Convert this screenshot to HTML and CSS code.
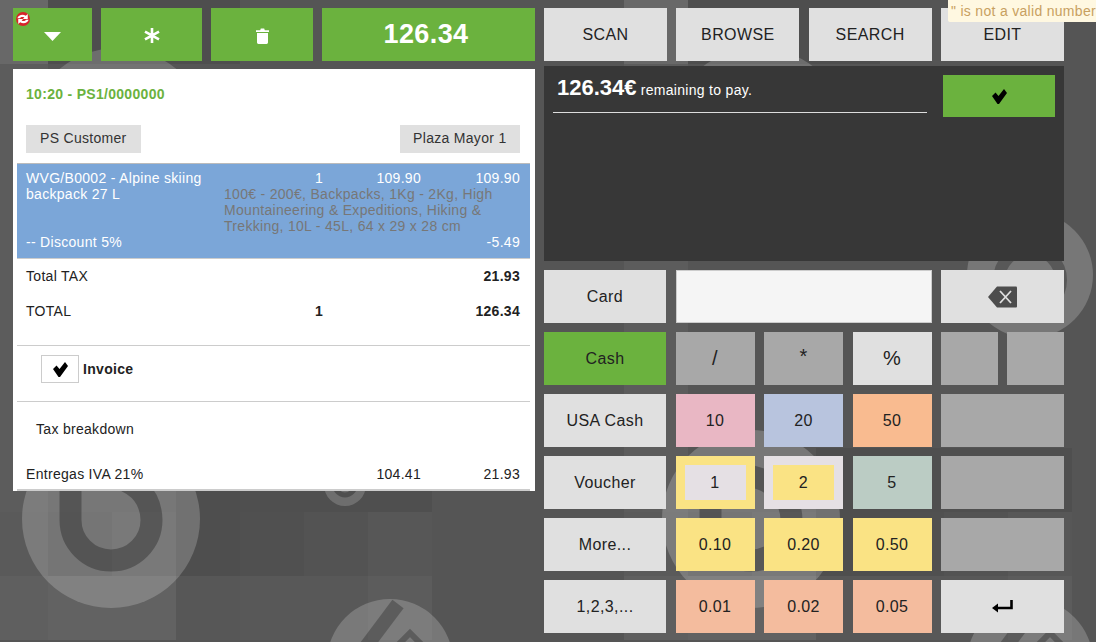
FILE: index.html
```html
<!DOCTYPE html>
<html lang="en">
  <head>
    <meta charset="UTF-8" />
    <title>Point of Sale</title>
    <link rel="stylesheet" href="styles.css">
  </head>
  <body>
    <!-- decorative mosaic behind everything -->
    <svg class="mosaic" width="1096" height="642" aria-hidden="true">
      <defs>
        <g id="motif">
          <rect x="-16" y="0" width="64" height="64" fill="#686868"/>
          <rect x="48" y="0" width="192" height="64" fill="#4e4e4e"/>
          <rect x="-16" y="64" width="64" height="448" fill="#5c5c5c"/>
          <rect x="-16" y="512" width="64" height="64" fill="#5a5a5a"/>
          <rect x="48" y="512" width="64" height="64" fill="#535353"/>
          <rect x="112" y="512" width="64" height="64" fill="#585858"/>
          <rect x="176" y="448" width="64" height="128" fill="#4e4e4e"/>
          <rect x="240" y="448" width="192" height="64" fill="#4f4f4f"/>
          <rect x="240" y="512" width="64" height="64" fill="#505050"/>
          <rect x="304" y="512" width="64" height="64" fill="#535353"/>
          <rect x="368" y="512" width="64" height="64" fill="#575757"/>
          <rect x="-16" y="576" width="64" height="64" fill="#5f5f5f"/>
          <rect x="48" y="576" width="128" height="64" fill="#626262"/>
          <rect x="176" y="576" width="64" height="64" fill="#575757"/>
          <rect x="240" y="576" width="128" height="64" fill="#585858"/>
          <rect x="368" y="576" width="64" height="64" fill="#5c5c5c"/>
          <circle cx="118" cy="140" r="92" fill="#fff" fill-opacity="0.18"/>
          <circle cx="111" cy="519" r="89" fill="#fff" fill-opacity="0.2"/>
          <path d="M70.5 470V520a40 40 0 0 0 81 0C151 495 135 480 105 475" fill="none" stroke="#000" stroke-opacity="0.28" stroke-width="22"/>
          <circle cx="345" cy="485" r="21" fill="#fff" fill-opacity="0.18"/>
          <circle cx="345" cy="485" r="10" fill="none" stroke="#000" stroke-opacity="0.28" stroke-width="5"/>
          <circle cx="390" cy="662" r="63" fill="#fff" fill-opacity="0.2"/>
          <path d="M398 604L365 648" stroke="#000" stroke-opacity="0.26" stroke-width="14"/>
          <path d="M397 646L410 633L423 646" fill="none" stroke="#000" stroke-opacity="0.26" stroke-width="6"/>
          <circle cx="390" cy="275" r="63" fill="#fff" fill-opacity="0.2"/>
          <circle cx="390" cy="280" r="31" fill="none" stroke="#000" stroke-opacity="0.26" stroke-width="12"/>
        </g>
      </defs>
      <rect width="1096" height="642" fill="#555"/>
      <use href="#motif"/>
      <use href="#motif" x="640"/>
    </svg>

    <div class="screen">
      <div class="left">
        <div class="actions">
          <button class="btn green act-menu">
            <span class="badge">
              <svg viewBox="2 2 10 10" width="14" height="14">
                <path d="M3 6.5C3.6 4.2 6.6 3.2 9 4.6L10.4 3.4V7H6.8L8 5.9C6.6 5.2 5.4 5.6 4.8 6.5Z M11 7.5C10.4 9.8 7.4 10.8 5 9.4L3.6 10.6V7H7.2L6 8.1C7.4 8.8 8.6 8.4 9.2 7.5Z" fill="#fff"/>
              </svg>
            </span>
            <svg class="caret" viewBox="0 0 17 9" width="17" height="9"><path d="M0 0H17L8.5 9Z" fill="#fff"/></svg>
          </button>
          <button class="btn green act-star">
            <svg viewBox="0 0 16 15" width="16" height="15">
              <path d="M8 0V15M1 3.6L15 11.4M15 3.6L1 11.4" stroke="#fff" stroke-width="2.6"/>
            </svg>
          </button>
          <button class="btn green act-trash">
            <svg viewBox="0 0 13 16" width="13" height="16">
              <path d="M0 2.2H4.2L4.8 0.6H8.2L8.8 2.2H13V4H0ZM1 5H12V14.6Q12 16 10.6 16H2.4Q1 16 1 14.6Z" fill="#fff"/>
            </svg>
          </button>
          <button class="btn green act-total">126.34</button>
        </div>

        <div class="ticket">
          <div class="ticket-ref">10:20 - PS1/0000000</div>
          <div class="ticket-parties">
            <span class="chip">PS Customer</span>
            <span class="chip">Plaza Mayor 1</span>
          </div>

          <div class="lines selected">
            <div class="line-name">WVG/B0002 - Alpine skiing backpack 27 L</div>
            <div class="col-qty">1</div>
            <div class="col-price">109.90</div>
            <div class="col-total">109.90</div>
            <div class="line-attrs">100€ - 200€, Backpacks, 1Kg - 2Kg, High Mountaineering &amp; Expeditions, Hiking &amp; Trekking, 10L - 45L, 64 x 29 x 28 cm</div>
            <div class="line-discount">-- Discount 5%</div>
            <div class="col-total">-5.49</div>
          </div>

          <div class="lines sum-tax">
            <div class="line-discount">Total TAX</div>
            <div class="col-total strong">21.93</div>
          </div>
          <div class="lines sum-total">
            <div class="line-discount">TOTAL</div>
            <div class="col-qty strong">1</div>
            <div class="col-total strong">126.34</div>
          </div>

          <div class="invoice">
            <span class="checkbox">
              <svg viewBox="0 0 15 15" width="15" height="15">
                <path d="M0 7L3.5 3.5L6.5 7L12 0L15 4L7 15H5.5Z" fill="#000"/>
              </svg>
            </span>
            <b>Invoice</b>
          </div>

          <div class="tax-title">Tax breakdown</div>
          <div class="lines tax-row">
            <div class="line-discount">Entregas IVA 21%</div>
            <div class="col-price">104.41</div>
            <div class="col-total">21.93</div>
          </div>
        </div>
      </div>

      <div class="right">
        <div class="modes">
          <button class="btn">SCAN</button>
          <button class="btn">BROWSE</button>
          <button class="btn">SEARCH</button>
          <button class="btn">EDIT</button>
        </div>

        <div class="payment">
          <div class="remaining">
            <div class="remaining-text"><strong>126.34€</strong> remaining to pay.</div>
          </div>
          <button class="btn green confirm">
            <svg viewBox="0 0 15 15" width="15" height="15">
              <path d="M0 7L3.5 3.5L6.5 7L12 0L15 4L7 15H5.5Z" fill="#000"/>
            </svg>
          </button>
        </div>

        <div class="keypad">
          <button class="btn">Card</button>
          <div class="display span-3"></div>
          <button class="btn">
            <svg viewBox="0 0 29 22" width="29" height="22">
              <path d="M0 11L9 0.5H28Q29 0.5 29 1.5V20.5Q29 21.5 28 21.5H9Z" fill="#4d4d4d"/>
              <path d="M12 5L23 17M23 5L12 17" stroke="#e0e0e0" stroke-width="1.8"/>
            </svg>
          </button>

          <button class="btn green">Cash</button>
          <button class="btn off big">/</button>
          <button class="btn off big star">*</button>
          <button class="btn big">%</button>
          <div class="half">
            <button class="btn off"></button>
            <button class="btn off"></button>
          </div>

          <button class="btn">USA Cash</button>
          <button class="btn pink">10</button>
          <button class="btn blue">20</button>
          <button class="btn orange">50</button>
          <button class="btn off"></button>

          <button class="btn">Voucher</button>
          <button class="btn yellow framed"><span class="mauve">1</span></button>
          <button class="btn mauve framed"><span class="yellow">2</span></button>
          <button class="btn teal">5</button>
          <button class="btn off"></button>

          <button class="btn">More...</button>
          <button class="btn yellow">0.10</button>
          <button class="btn yellow">0.20</button>
          <button class="btn yellow">0.50</button>
          <button class="btn off"></button>

          <button class="btn">1,2,3,...</button>
          <button class="btn salmon">0.01</button>
          <button class="btn salmon">0.02</button>
          <button class="btn salmon">0.05</button>
          <button class="btn">
            <svg viewBox="0 0 21 15" width="21" height="15">
              <path d="M19.5 1V9H4" fill="none" stroke="#000" stroke-width="2.6"/>
              <path d="M0 9L6 4.5V13.5Z" fill="#000"/>
            </svg>
          </button>
        </div>
      </div>
    </div>

    <div class="notice">" is not a valid number</div>
  </body>
</html>
```

FILE: styles.css
```css
html,
body {
  margin: 0;
  height: 642px;
  overflow: hidden;
}
body {
  font-family: "Liberation Sans", Arial, sans-serif;
  font-size: 14px;
  letter-spacing: 0.3px;
  color: #222;
  background: #555;
}
.mosaic {
  position: absolute;
  top: 0;
  left: 0;
}
.screen {
  position: relative;
  display: flex;
  gap: 9px;
  padding: 8px 0 0 13px;
}

.btn {
  display: flex;
  align-items: center;
  justify-content: center;
  height: 53px;
  padding: 0;
  box-sizing: border-box;
  border: none;
  background: #e0e0e0;
  color: #222;
  font-family: inherit;
  font-size: 16px;
  letter-spacing: 0.4px;
}
.green {
  background: #6bb23e;
}
.off {
  background: #a8a8a8;
}
.big {
  font-size: 20px;
}
.star {
  padding-bottom: 4px;
}
.pink {
  background: #e9b7c4;
}
.blue {
  background: #b8c4de;
}
.orange {
  background: #f9bb90;
}
.teal {
  background: #bbccc4;
}
.yellow {
  background: #fae384;
}
.salmon {
  background: #f4bc9e;
}
.mauve {
  background: #e5e0e4;
}
.framed span {
  display: flex;
  align-items: center;
  justify-content: center;
  width: 61px;
  height: 35px;
}

/* left column */
.left {
  width: 522px;
}
.actions {
  display: flex;
  gap: 9px;
}
.act-menu {
  position: relative;
  width: 79px;
  padding-top: 4px;
}
.act-star {
  width: 101px;
  padding-top: 2px;
}
.act-trash {
  width: 102px;
  padding-top: 2px;
}
.act-total {
  flex: 1;
  padding-right: 5px;
  color: #fff;
  font-size: 27px;
  font-weight: bold;
}
.badge {
  position: absolute;
  top: 4px;
  left: 3px;
  width: 14px;
  height: 14px;
  border-radius: 50%;
  background: #d8232a;
}
.badge svg {
  display: block;
}
.ticket {
  height: 422px;
  margin-top: 8px;
  padding: 0 5px 0 4px;
  box-sizing: border-box;
  background: #fff;
  overflow: hidden;
  position: relative;
}
.ticket::after {
  content: "";
  position: absolute;
  left: 4px;
  right: 5px;
  bottom: 0;
  height: 2px;
  background: #ccc;
}
.ticket-ref {
  padding: 17px 9px 0;
  line-height: 16px;
  color: #6bb23e;
  font-weight: bold;
}
.ticket-parties {
  display: flex;
  justify-content: space-between;
  margin-top: 23px;
  padding: 0 10px 0 9px;
}
.chip {
  padding: 0 14px 1px;
  line-height: 27px;
  background: #e0e0e0;
  color: #333;
}
.chip:last-child {
  padding: 0 13.5px 1px;
}
.lines {
  display: grid;
  grid-template-columns: 198px 73px 44px 80px 99px;
  padding: 0 9px;
  line-height: 16px;
}
.selected {
  margin-top: 10px;
  padding-top: 6px;
  padding-bottom: 8px;
  background: #7ba6d8;
  color: #fff;
  border-top: 1px solid #bbb;
  border-bottom: 1px solid #ccc;
}
.line-name {
  grid-column: 1;
  grid-row: 1 / 3;
}
.col-qty {
  grid-column: 3;
  text-align: center;
}
.col-price {
  grid-column: 4;
  text-align: right;
}
.col-total {
  grid-column: 5;
  text-align: right;
}
.line-attrs {
  grid-column: 2 / -1;
  grid-row: 2;
  width: 272px;
  color: #777;
}
.line-discount {
  grid-column: 1 / 3;
}
.strong {
  font-weight: bold;
}
.sum-tax {
  margin-top: 9px;
}
.sum-total {
  margin-top: 19px;
}
.invoice {
  display: flex;
  align-items: flex-start;
  gap: 4px;
  height: 46px;
  margin-top: 26px;
  padding: 9px 0 0 24px;
  border-top: 1px solid #ccc;
  border-bottom: 1px solid #ccc;
  line-height: 28px;
}
.checkbox {
  display: flex;
  align-items: center;
  justify-content: center;
  width: 36px;
  height: 26px;
  border: 1px solid #ccc;
}
.tax-title {
  margin-top: 19px;
  padding-left: 19px;
  line-height: 16px;
}
.tax-row {
  margin-top: 29px;
}

/* right column */
.right {
  width: 520px;
}
.modes {
  display: grid;
  grid-template-columns: repeat(4, 123px);
  column-gap: 9.33px;
}
.payment {
  display: flex;
  justify-content: space-between;
  height: 195px;
  margin-top: 5px;
  padding: 9px 9px 0;
  box-sizing: border-box;
  background: #373737;
}
.remaining {
  width: 374px;
  height: 38px;
  padding: 0 4px;
  box-sizing: border-box;
  border-bottom: 1px solid #ddd;
}
.remaining-text {
  color: #fff;
  line-height: 26px;
}
.remaining-text strong {
  font-size: 22px;
  letter-spacing: 0;
}
.confirm {
  width: 112px;
  height: 42px;
}
.keypad {
  display: grid;
  grid-template-columns: 122px 79px 79px 79px 123px;
  gap: 9px 9.5px;
  margin-top: 9px;
}
.span-3 {
  grid-column: span 3;
}
.display {
  height: 53px;
  box-sizing: border-box;
  background: #f5f5f5;
  border: 1px solid #ccc;
}
.half {
  display: grid;
  grid-template-columns: 57px 57px;
  gap: 9px;
}

.notice {
  position: absolute;
  top: 0;
  left: 948px;
  width: 148px;
  height: 22px;
  padding-left: 3px;
  box-sizing: border-box;
  background: #fff8e1;
  color: #c8a060;
  line-height: 22px;
  white-space: nowrap;
  border-radius: 0 0 0 2px;
}
```
